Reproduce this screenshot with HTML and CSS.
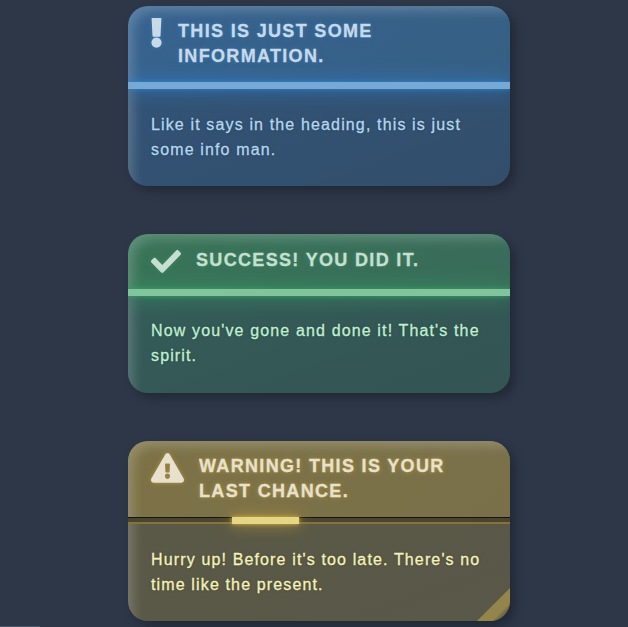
FILE: index.html
```
<!DOCTYPE html>
<html lang="en">
<head>
<meta charset="utf-8">
<title>Alerts</title>
<link rel="stylesheet" href="styles.css">
</head>
<body>
<main class="alerts">
  <section class="card info">
    <header class="head">
      <svg class="icon" width="11" height="30" viewBox="0 0 11 30"><path d="M1.2 0H9.8Q10.5 0 10.4 .8L9.5 18Q9.4 18.8 8.6 18.8H2.4Q1.6 18.8 1.5 18L.6 .8Q.5 0 1.2 0Z"/><circle cx="5.5" cy="24.6" r="5.1"/></svg>
      <h2>This is just some<br>information.</h2>
    </header>
    <div class="bar"></div>
    <p>Like it says in the heading, this is just<br>some info man.</p>
  </section>
  <section class="card success">
    <header class="head">
      <svg class="icon" width="30" height="23" viewBox="0 65 512 382" preserveAspectRatio="none"><path d="M173.898 439.404l-166.4-166.4c-9.997-9.997-9.997-26.206 0-36.204l36.203-36.204c9.997-9.998 26.207-9.998 36.204 0L192 312.69 432.095 72.596c9.997-9.997 26.207-9.997 36.204 0l36.203 36.204c9.997 9.997 9.997 26.206 0 36.204l-294.4 294.401c-9.998 9.997-26.207 9.997-36.204-.001z"/></svg>
      <h2>Success! You did it.</h2>
    </header>
    <div class="bar"></div>
    <p>Now you've gone and done it! That's the<br>spirit.</p>
  </section>
  <section class="card warning">
    <header class="head">
      <svg class="icon" width="33" height="30" viewBox="0 0 576 512"><path d="M569.517 440.013C587.975 472.007 564.806 512 527.94 512H48.054c-36.937 0-59.999-40.055-41.577-71.987L246.423 23.985c18.467-32.009 64.72-31.951 83.154 0l239.94 416.028zM288 354c-25.405 0-46 20.595-46 46s20.595 46 46 46 46-20.595 46-46-20.595-46-46-46zm-43.673-165.346l7.418 136c.347 6.364 5.609 11.346 11.982 11.346h48.546c6.373 0 11.635-4.982 11.982-11.346l7.418-136c.375-6.874-5.098-12.654-11.982-12.654h-63.383c-6.884 0-12.356 5.78-11.981 12.654z"/></svg>
      <h2>Warning! This is your<br>last chance.</h2>
    </header>
    <div class="bar"><div class="progress"></div></div>
    <p>Hurry up! Before it's too late. There's no<br>time like the present.</p>
  </section>
</main>
</body>
</html>
```
FILE: styles.css
```
* { box-sizing: border-box; }
html { background: #2d3748; }
body {
  margin: 0;
  height: 627px;
  overflow: hidden;
  font-family: "Liberation Sans", Arial, sans-serif;
  background: linear-gradient(#4a5568, #4a5568) 0 100% / 40px 1px no-repeat #2d3748;
}
.alerts {
  width: 382px;
  margin-left: 127.5px;
  padding-top: 6px;
  display: flex;
  flex-direction: column;
  gap: 48px;
}
.card {
  position: relative;
  overflow: hidden;
  border-radius: 20px;
  height: 180px;
  background: var(--body);
  box-shadow: 5px 5px 10px rgba(0, 0, 0, .25);
}
.card::after {
  content: "";
  position: absolute;
  inset: 0 -12px -12px 0;
  border-radius: 20px;
  box-shadow: inset 5px 5px 12px rgba(255, 255, 255, .2);
  pointer-events: none;
}
.head {
  display: flex;
  align-items: flex-start;
  height: 76px;
  padding: 13px 23.5px 0;
  background: var(--head);
}
.icon {
  flex: none;
  overflow: visible;
  fill: var(--title);
  filter: drop-shadow(0 0 2px var(--soft));
}
h2 {
  margin: 0;
  font-size: 18px;
  line-height: 25px;
  letter-spacing: 1.33px;
  text-transform: uppercase;
  white-space: nowrap;
  color: var(--title);
  -webkit-text-stroke: .3px var(--title);
  text-shadow: 0 0 5px var(--soft);
}
.bar {
  position: relative;
  z-index: 1;
  height: 7px;
  background: var(--bar);
  box-shadow: 0 0 5px var(--glow), 0 0 20px var(--glow);
}
p {
  margin: 0;
  padding: 23px 23.5px 0;
  font-size: 16px;
  line-height: 25px;
  letter-spacing: 1.14px;
  white-space: nowrap;
  color: var(--text);
  -webkit-text-stroke: .3px var(--text);
  text-shadow: 0 0 3px rgba(0, 0, 0, .25);
}
.info {
  --head: linear-gradient(135deg, #37638f, #365f83);
  --body: linear-gradient(160deg, #33557a, #324e6b);
  --bar: #76a9d5;
  --glow: #3182ce;
  --soft: #3578b5;
  --title: #c8d9e8;
  --text: #b2d7ee;
}
.info .icon { margin: -1px 16px 0 0; }
.success {
  --head: linear-gradient(135deg, #397458, #396b5a);
  --body: linear-gradient(160deg, #355e59, #335453);
  --bar: #82c49b;
  --glow: #38a169;
  --soft: #398c61;
  --title: #c7dfd2;
  --text: #c0f0d1;
  height: 158.5px;
}
.success .head {
  height: 55px;
  padding-top: 14px;
}
.success .icon { margin: 2px 15px 0 0; }
.success p { padding-top: 22px; }
.warning {
  --head: linear-gradient(135deg, #7d7246, #79704a);
  --body: linear-gradient(160deg, #5b5945, #595849);
  --bar: linear-gradient(#15150f 0 1px, #484631 1px 5px, #88723a 5px 7px);
  --glow: #d6b43b;
  --soft: #b0963f;
  --title: #e7e1cd;
  --text: #f5f2b8;
}
.warning::before {
  content: "";
  position: absolute;
  right: 0;
  bottom: 0;
  width: 33px;
  height: 33px;
  background: linear-gradient(135deg, transparent 49%, #94854a 51% 72%, #6b6549 80%);
}
.warning .head {
  height: 76.5px;
  padding-top: 13.5px;
}
.warning .icon { margin: -1px 15px 0 0; }
.warning .bar { box-shadow: none; }
.progress {
  width: 67px;
  height: 7px;
  margin-left: 104px;
  background: #e5d686;
  box-shadow: 0 0 4px #d6b43b, 0 0 16px #b7983b;
}
```
